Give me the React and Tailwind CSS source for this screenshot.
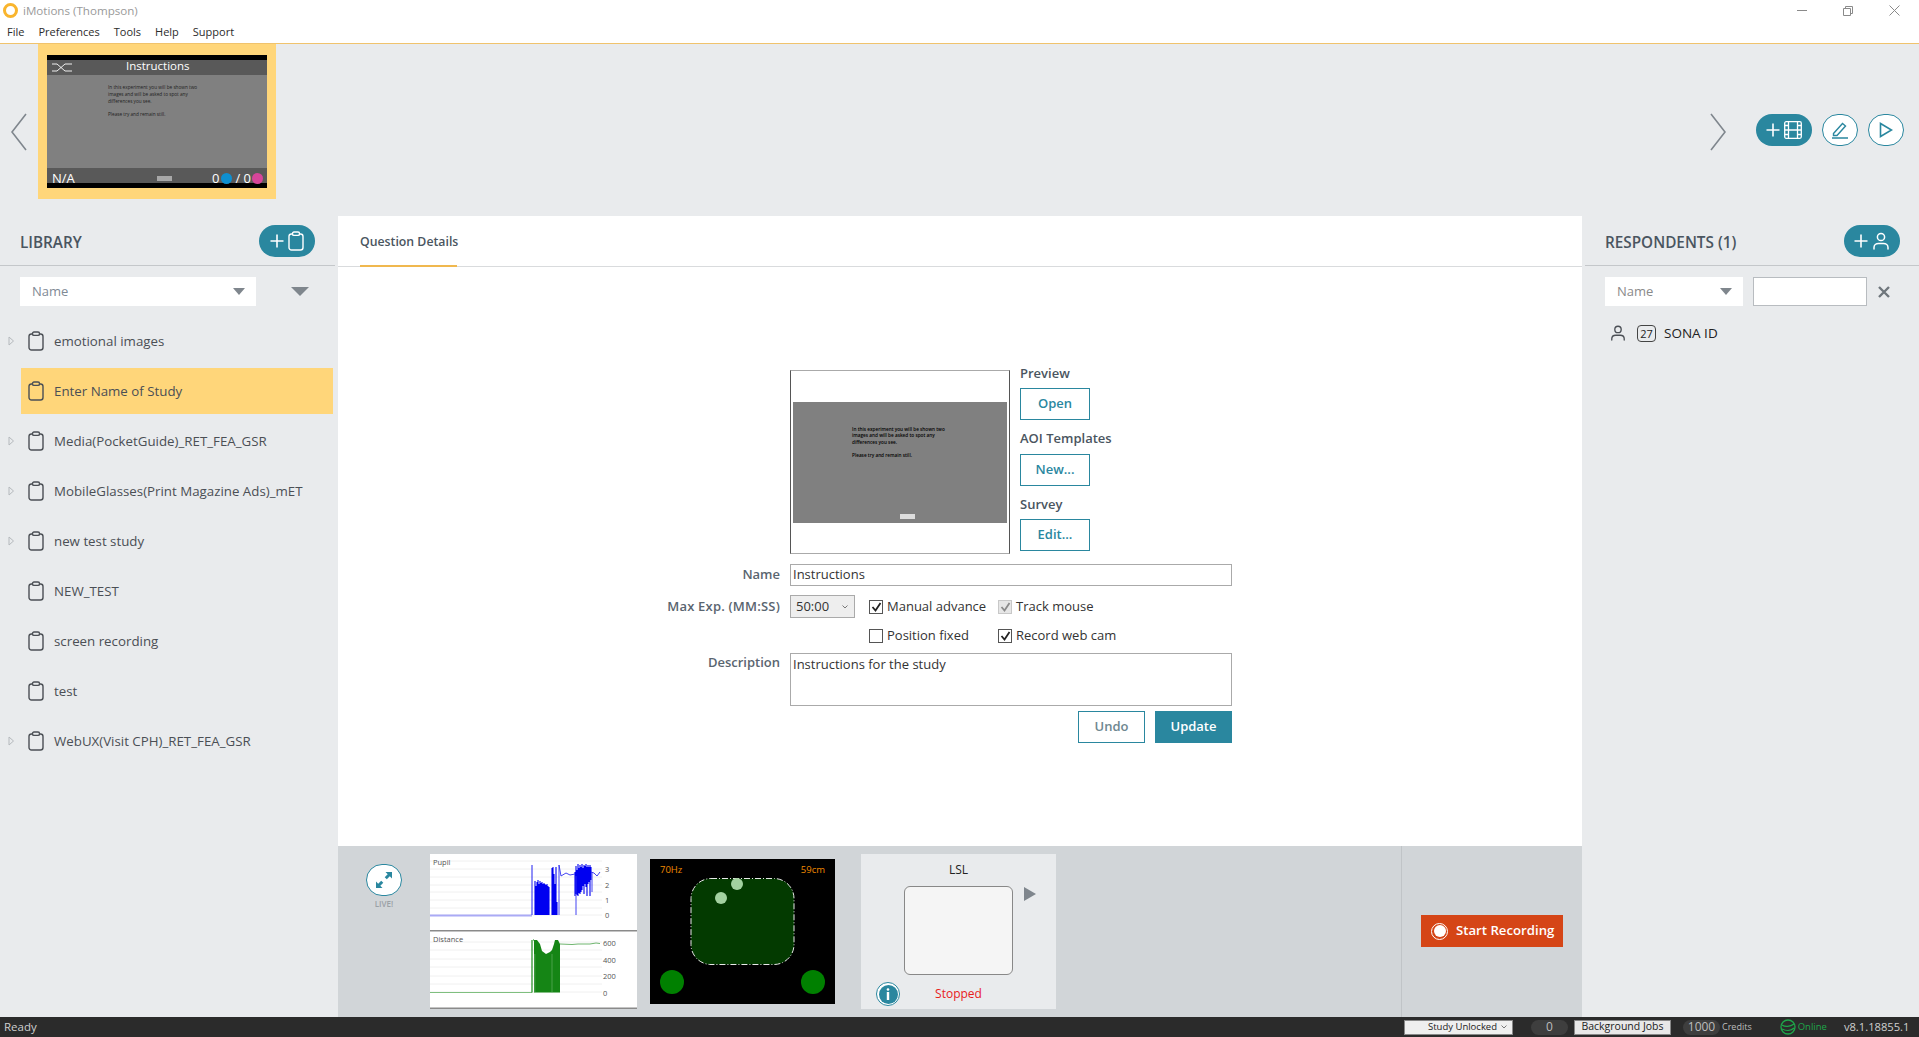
import React from 'react';

const ClipboardIcon = ({ className = 'text-[#4b4f55]' }) => (
    <svg width="16" height="20" viewBox="0 0 16 20" fill="none" stroke="currentColor" strokeWidth="1.4" className={className}>
        <rect x="1" y="3" width="14" height="16" rx="2.5" />
        <rect x="4.5" y="1" width="7" height="3.4" rx="1.5" fill="#e9ebed" />
    </svg>
);

const UserIcon = ({ size = 18, color = '#4b4f55' }) => (
    <svg width={size} height={size} viewBox="0 0 18 18" fill="none" stroke={color} strokeWidth="1.5">
        <circle cx="9" cy="5" r="3.6" />
        <path d="M2 17v-1.5c0-2.4 2-4 4.5-4h5c2.500 0 4.500 1.600 4.500 4V17" strokeLinecap="round" />
    </svg>
);

const PlusPill = ({ children }) => (
    <div className="flex h-[32px] w-[56px] items-center justify-center gap-[4px] rounded-full bg-[#2a879f]">
        <svg width="14" height="14" viewBox="0 0 14 14" stroke="white" strokeWidth="1.6"><path d="M7 0.500v13M0.500 7h13" /></svg>
        {children}
    </div>
);

const Triangle = () => (
    <svg width="7" height="10" viewBox="0 0 7 10" fill="none" stroke="#b5b9bd" strokeWidth="1"><path d="M1 1l4.500 4L1 9z" /></svg>
);

const Caret = ({ w = 12, h = 7, color = '#7f868d' }) => (
    <svg width={w} height={h} viewBox="0 0 12 7" fill={color} preserveAspectRatio="none"><path d="M0 0h12L6 7z" /></svg>
);

const studies = [
    { name: 'emotional images', arrow: true },
    { name: 'Enter Name of Study', active: true },
    { name: 'Media(PocketGuide)_RET_FEA_GSR', arrow: true },
    { name: 'MobileGlasses(Print Magazine Ads)_mET', arrow: true },
    { name: 'new test study', arrow: true },
    { name: 'NEW_TEST' },
    { name: 'screen recording' },
    { name: 'test' },
    { name: 'WebUX(Visit CPH)_RET_FEA_GSR', arrow: true },
];

const TitleBar = () => (
    <div className="h-[44px] shrink-0 border-b border-[#f0c36d] bg-white">
        <div className="flex h-[21px] items-center justify-between">
            <div className="flex items-center">
                <div className="ml-[3px] h-[15px] w-[15px] rounded-full border-[3px] border-[#f9b52e]" />
                <span className="ml-[5px] text-[11.600px] text-[#9a9a9a]">iMotions (Thompson)</span>
            </div>
            <div className="flex items-center gap-[36px] pr-[19px]">
                <div className="h-px w-[10px] bg-[#8a8a8a]" />
                <svg width="10" height="10" viewBox="0 0 10 10" fill="none" stroke="#8a8a8a"><path d="M2.500 2.500V0.500h7v7h-2M0.500 2.500h7v7h-7z" /></svg>
                <svg width="11" height="11" viewBox="0 0 11 11" stroke="#8a8a8a"><path d="M0.500 0.500l10 10M10.500 0.500l-10 10" /></svg>
            </div>
        </div>
        <div className="ml-[7px] flex h-[22px] items-center gap-[14px] text-[11px] text-[#2c2c2c]">
            <span>File</span>
            <span>Preferences</span>
            <span>Tools</span>
            <span>Help</span>
            <span>Support</span>
        </div>
    </div>
);

const SlideThumb = () => (
    <div className="flex h-[155px] w-[238px] items-start bg-[#ffd67a] pl-[9px] pt-[11px]">
        <div className="flex h-[133px] w-[220px] flex-col bg-black py-[5px]">
            <div className="flex h-[15px] items-center bg-[#595959] pl-[5px]">
                <svg width="21" height="9" viewBox="0 0 21 9" fill="none" stroke="white" strokeWidth="0.900"><path d="M0 1h5l8 7h7M0 8h5l8-7h7" /></svg>
                <span className="-mt-[3px] ml-[53px] text-[11.500px] leading-none text-white">Instructions</span>
            </div>
            <div className="h-[93px] bg-[#808080] pl-[61px] pt-[9px] text-[4.700px] leading-[7px] text-[#222]">
                <p>In this experiment you will be shown two</p>
                <p>images and will be asked to spot any</p>
                <p>differences you see.</p>
                <p className="mt-[6px]">Please try and remain still.</p>
            </div>
            <div className="flex h-[15px] items-center bg-[#595959] pl-[5px] pr-[4px] pt-[5px] text-[13px] leading-none text-white">
                <span className="w-[105px]">N/A</span>
                <div className="h-[5px] w-[15px] bg-[#a8a8a8]" />
                <div className="ml-auto flex items-center gap-[1px]">
                    <span>0</span>
                    <div className="ml-[1px] h-[11px] w-[11px] rounded-full bg-[#0e8fd0]" />
                    <span className="ml-[2px]">/ 0</span>
                    <div className="h-[11px] w-[11px] rounded-full bg-[#d6459a]" />
                </div>
            </div>
        </div>
    </div>
);

const SlideStrip = () => (
    <div className="flex h-[172px] shrink-0 bg-[#e9ebed]">
        <div className="flex h-[155px] w-[38px] items-center pl-[11px] pt-[20px]">
            <svg width="16" height="38" viewBox="0 0 16 38" fill="none" stroke="#7f868d" strokeWidth="1.600"><path d="M15 1L1 19l14 18" /></svg>
        </div>
        <SlideThumb />
        <div className="ml-[1434px] flex h-[155px] w-[16px] items-center pt-[20px]">
            <svg width="16" height="38" viewBox="0 0 16 38" fill="none" stroke="#7f868d" strokeWidth="1.600"><path d="M1 1l14 18L1 37" /></svg>
        </div>
        <div className="ml-[30px] flex items-start gap-[10px] pt-[70px]">
            <PlusPill>
                <svg width="18" height="18" viewBox="0 0 18 18" fill="none" stroke="white" strokeWidth="1.300">
                    <rect x="0.700" y="0.700" width="16.600" height="16.600" rx="1.500" />
                    <path d="M4.500 0.700v16.600M13.500 0.700v16.600M4.500 9h9M0.700 4.500h3.800M0.700 9h3.800M0.700 13.500h3.800M13.500 4.500h3.800M13.500 9h3.800M13.500 13.500h3.800" />
                </svg>
            </PlusPill>
            <div className="flex h-[32px] w-[36px] items-center justify-center rounded-full border border-[#2a879f] bg-white">
                <svg width="18" height="18" viewBox="0 0 18 18" fill="none" stroke="#2a879f" strokeWidth="1.400"><path d="M2.500 12.500L11.500 2.500l3 2.500-8.500 9.500H2.500zM1 17h16" /></svg>
            </div>
            <div className="flex h-[32px] w-[36px] items-center justify-center rounded-full border border-[#2a879f] bg-white">
                <svg width="14" height="16" viewBox="0 0 14 16" fill="none" stroke="#2a879f" strokeWidth="1.600"><path d="M1.500 1.500v13L12.500 8z" /></svg>
            </div>
        </div>
    </div>
);

const Library = () => (
    <aside className="flex w-[338px] shrink-0 flex-col bg-[#e9ebed]">
        <div className="mr-[3px] flex h-[50px] items-center justify-between border-b border-[#c4c7ca] pl-[20px] pr-[20px]">
            <span className="pt-[3px] text-[15.300px] font-semibold text-[#4a5560]">LIBRARY</span>
            <PlusPill><ClipboardIcon className="text-white [&_rect:last-child]:fill-[#2a879f]" /></PlusPill>
        </div>
        <div className="mt-[11px] flex items-center pl-[20px]">
            <div className="flex h-[29px] w-[236px] items-center justify-between bg-white pl-[12px] pr-[11px] text-[13px] text-[#7f8a95]">
                <span>Name</span>
                <Caret />
            </div>
            <div className="ml-[35px]"><Caret w={18} h={9} /></div>
        </div>
        <div className="mt-[12px] flex flex-col gap-[4px]">
            {studies.map((s) => (
                <div key={s.name} className="flex items-center">
                    <div className="flex w-[21px] justify-center pl-[1px]">{s.arrow && <Triangle />}</div>
                    <div className={`flex h-[46px] w-[312px] items-center gap-[10px] pl-[7px] text-[13.300px] text-[#4b4f55] ${s.active ? 'bg-[#ffd67a]' : ''}`}>
                        <ClipboardIcon className={s.active ? 'text-[#4b4f55] [&_rect:last-child]:fill-[#ffd67a]' : 'text-[#4b4f55]'} />
                        <span className="pt-[2px]">{s.name}</span>
                    </div>
                </div>
            ))}
        </div>
    </aside>
);

const OutlineButton = ({ children }) => (
    <div className="flex h-[32px] w-[70px] items-center justify-center border border-[#2a879f] text-[13px] font-semibold text-[#2a879f]">{children}</div>
);

const Check = ({ checked, disabled }) => (
    <div className={`flex h-[14px] w-[14px] items-center justify-center border ${disabled ? 'border-[#c8c8c8] bg-[#e6e6e6]' : 'border-[#555] bg-white'}`}>
        {checked && (
            <svg width="11" height="10" viewBox="0 0 11 10" fill="none" stroke={disabled ? '#8a8a8a' : '#222'} strokeWidth="1.800"><path d="M1.500 5l3 3.500L9.500 1" /></svg>
        )}
    </div>
);

const CheckField = ({ label, width, ...rest }) => (
    <div className={`flex items-center gap-[4px] text-[13px] text-[#333] ${width}`}>
        <Check {...rest} />
        <span>{label}</span>
    </div>
);

const FormLabel = ({ children, className = '' }) => (
    <div className={`w-[120px] shrink-0 text-right text-[13px] font-semibold text-[#5a6570] ${className}`}>{children}</div>
);

const QuestionForm = () => (
    <div className="ml-[322px] flex flex-col pt-[103px]">
        <div className="ml-[130px] flex gap-[10px]">
            <div className="flex h-[184px] w-[220px] flex-col justify-center border border-[#555] border-t-[#aaa] border-b-[#aaa] bg-white px-[2px]">
                <div className="relative h-[121px] bg-[#808080] pl-[59px] pt-[24px] text-[4.700px] font-semibold leading-[6.500px] text-black">
                    <p>In this experiment you will be shown two</p>
                    <p>images and will be asked to spot any</p>
                    <p>differences you see.</p>
                    <p className="mt-[6.500px]">Please try and remain still.</p>
                    <div className="absolute bottom-[4px] left-[107px] h-[5px] w-[15px] bg-[#ddd]" />
                </div>
            </div>
            <div className="-mt-[5px] flex flex-col">
                <div className="mb-[5px] flex h-[18px] items-center text-[13px] font-semibold text-[#4a5560]">Preview</div>
                <OutlineButton>Open</OutlineButton>
                <div className="mt-[9px] flex h-[25px] items-center pb-[5px] text-[13px] font-semibold text-[#4a5560]">AOI Templates</div>
                <OutlineButton>New...</OutlineButton>
                <div className="mt-[9px] flex h-[24px] items-center pb-[4px] text-[13px] font-semibold text-[#4a5560]">Survey</div>
                <OutlineButton>Edit...</OutlineButton>
            </div>
        </div>
        <div className="mt-[10px] flex items-center gap-[10px]">
            <FormLabel>Name</FormLabel>
            <div className="flex h-[22px] w-[442px] items-center border border-[#aaa] pl-[2px] text-[13px] text-[#333]">Instructions</div>
        </div>
        <div className="mt-[9px] flex gap-[10px]">
            <FormLabel className="whitespace-nowrap leading-[23px] tracking-[0.200px]">
                <span className="float-right">Max Exp. (MM:SS)</span>
            </FormLabel>
            <div className="flex h-[23px] w-[65px] items-center justify-between border border-[#aaa] bg-[#eeeeee] pl-[5px] pr-[6px] text-[13px] text-[#333]">
                <span>50:00</span>
                <svg width="6" height="4" viewBox="0 0 6 4" fill="none" stroke="#777"><path d="M0.500 0.500L3 3l2.500-2.500" /></svg>
            </div>
            <div className="ml-[4px] flex flex-col">
                <div className="flex h-[23px] items-center">
                    <CheckField label="Manual advance" width="w-[129px]" checked />
                    <CheckField label="Track mouse" checked disabled />
                </div>
                <div className="mt-[6px] flex h-[23px] items-center">
                    <CheckField label="Position fixed" width="w-[129px]" />
                    <CheckField label="Record web cam" checked />
                </div>
            </div>
        </div>
        <div className="mt-[6px] flex gap-[10px]">
            <FormLabel>Description</FormLabel>
            <div className="h-[53px] w-[442px] border border-[#aaa] pl-[2px] pt-[1px] text-[13px] text-[#333]">Instructions for the study</div>
        </div>
        <div className="ml-[130px] mt-[5px] flex w-[442px] justify-end gap-[10px]">
            <div className="flex h-[32px] w-[67px] items-center justify-center border border-[#2a879f] text-[13px] font-semibold text-[#6e8790]">Undo</div>
            <div className="flex h-[32px] w-[77px] items-center justify-center bg-[#2a879f] text-[13px] font-semibold text-white">Update</div>
        </div>
    </div>
);

const gridLines = (ys) => ys.map((y) => <path key={y} d={`M0 ${y}H172`} stroke="#f0f0f0" strokeWidth="1" />);

// rough pupil trace, x / top pairs read off the reference
const pupilDense = [
    [105, 27], [106, 32], [107, 28], [108, 26], [109, 30], [110, 27], [111, 29], [112, 28], [113, 30], [114, 29],
    [115, 30], [116, 31], [117, 30], [118, 32], [119, 33], [122, 14], [123, 13], [124, 20], [125, 30], [126, 13], [127, 48],
];
const pupilUpper = [
    [145, 18, 42], [146, 12, 40], [147, 16, 41], [148, 10, 42], [149, 14, 39], [150, 11, 40], [151, 13, 38], [152, 10, 36],
    [153, 14, 32], [154, 11, 40], [155, 12, 30], [156, 10, 33], [157, 13, 42], [158, 11, 30], [159, 13, 28], [160, 11, 42], [161, 13, 26],
];

const GazeCharts = () => (
    <svg width="207" height="155" viewBox="0 0 207 155" className="block bg-white" style={{ fontFamily: 'Open Sans, sans-serif' }}>
        {gridLines([7, 15, 23, 31, 38, 46, 54, 61])}
        <text x="3" y="11" fontSize="7.500" fill="#555">Pupil</text>
        <path d="M0 61.500H102" stroke="#aaaaf5" strokeWidth="2" />
        <path d="M102 61V11" stroke="#2020f0" strokeWidth="1" />
        <path d={pupilDense.map(([x, y]) => `M${x} 61V${y}`).join('')} stroke="#0000f0" strokeWidth="1.100" fill="none" />
        <path d={pupilUpper.map(([x, a, b]) => `M${x} ${a}V${b}`).join('')} stroke="#0000f0" strokeWidth="1.100" fill="none" />
        <path d="M129 61V11L131 22L136 19L140 21L145 20M161 18L164 19L167 22L170 18M146 22V61M162 18V38" stroke="#3030f0" strokeWidth="0.900" fill="none" />
        <text x="175" y="18" fontSize="7.500" fill="#555">3</text>
        <text x="175" y="34" fontSize="7.500" fill="#555">2</text>
        <text x="175" y="49" fontSize="7.500" fill="#555">1</text>
        <text x="175" y="64" fontSize="7.500" fill="#555">0</text>
        <rect x="0" y="76" width="207" height="1.500" fill="#8a8a8a" />
        {gridLines([88, 96, 105, 113, 122, 130, 138])}
        <text x="3" y="88" fontSize="7.500" fill="#555">Distance</text>
        <path d="M0 138.500H102" stroke="#7fbf7f" strokeWidth="1" />
        <path d="M102 138.500V86M103 86h1" stroke="#1f8c1f" strokeWidth="1.200" fill="none" />
        <path d="M104 138.500V86h3L110 90L112 97L116 100L120 98L122 96L124 90L125 86H128L130 90V138.500Z" fill="#158515" />
        <path d="M104.800 138.500V100M122 138.500V100" stroke="#6fb56f" strokeWidth="0.600" />
        <path d="M130 90L142 90.500L148 90L160 90L166 89L170 89.500" stroke="#6fb56f" strokeWidth="1" fill="none" />
        <text x="173" y="92" fontSize="7.500" fill="#555">600</text>
        <text x="173" y="109" fontSize="7.500" fill="#555">400</text>
        <text x="173" y="125" fontSize="7.500" fill="#555">200</text>
        <text x="173" y="142" fontSize="7.500" fill="#555">0</text>
        <rect x="0" y="153.500" width="207" height="1.500" fill="#8a8a8a" />
    </svg>
);

const EyeBox = () => (
    <svg width="185" height="145" viewBox="0 0 185 145" className="block bg-black" style={{ fontFamily: 'Open Sans, sans-serif' }}>
        <text x="10" y="14" fontSize="9.500" fill="#f08a00">70Hz</text>
        <text x="175" y="14" fontSize="9.500" fill="#f08a00" textAnchor="end">59cm</text>
        <rect x="41" y="19.500" width="103" height="86" rx="20" fill="#033a00" stroke="#e8e8e8" strokeWidth="1" strokeDasharray="6 2 1 2" />
        <circle cx="87" cy="25" r="6" fill="#a3d1a0" />
        <circle cx="71" cy="39" r="6" fill="#a3d1a0" />
        <circle cx="22" cy="123" r="12" fill="#008000" />
        <circle cx="163" cy="123" r="12" fill="#008000" />
    </svg>
);

const LslCard = () => (
    <div className="ml-[26px] mt-[8px] h-[155px] w-[195px] bg-[#e9ebed]">
        <div className="pt-[7px] text-center text-[12px] text-[#222]">LSL</div>
        <div className="ml-[43px] mt-[7px] flex items-start">
            <div className="h-[89px] w-[109px] rounded-[6px] border border-[#888] bg-[#f5f5f5]" />
            <svg width="12" height="14" viewBox="0 0 12 14" fill="#7f868d" className="ml-[11px] mt-[1px]"><path d="M0 0l12 7-12 7z" /></svg>
        </div>
        <div className="relative mt-[7px] flex h-[24px] items-center justify-center text-[12px] text-[#e8201c]">
            Stopped
            <div className="absolute left-[15px] top-[0px] flex h-[24px] w-[24px] items-center justify-center rounded-full border border-[#2a879f] bg-white">
                <div className="flex h-[19px] w-[19px] items-center justify-center rounded-full bg-[#2a879f]">
                    <svg width="4" height="12" viewBox="0 0 4 12" fill="white"><circle cx="2" cy="1.500" r="1.300" /><rect x="0.800" y="4" width="2.400" height="8" /></svg>
                </div>
            </div>
        </div>
    </div>
);

const RecordingStrip = () => (
    <div className="flex h-[171px] shrink-0 bg-[#d1d5d8]">
        <div className="flex w-[92px] flex-col items-center pt-[18px]">
            <div className="flex h-[32px] w-[36px] items-center justify-center rounded-full border border-[#2a879f] bg-white">
                <svg width="18" height="18" viewBox="0 0 18 18" fill="#2a879f"><path d="M10.500 1h6.500v6.500l-2.200-2.200-3 3-2.100-2.100 3-3zM7.500 17H1v-6.500l2.200 2.200 3-3 2.100 2.100-3 3z" /></svg>
            </div>
            <span className="mt-[2px] text-[8px] font-semibold text-[#9aa1a6]">LIVE!</span>
        </div>
        <div className="pt-[8px]"><GazeCharts /></div>
        <div className="ml-[13px] pt-[13px]"><EyeBox /></div>
        <LslCard />
        <div className="ml-[345px] flex flex-1 items-start border-l border-[#c0c4c7] pl-[19px] pt-[69px]">
            <div className="flex h-[32px] w-[142px] items-center gap-[8px] bg-[#d54516] pl-[10px] text-[13.200px] font-semibold text-white">
                <div className="flex h-[17px] w-[17px] items-center justify-center rounded-full border border-white">
                    <div className="h-[12px] w-[12px] rounded-full bg-white" />
                </div>
                <span>Start Recording</span>
            </div>
        </div>
    </div>
);

const Respondents = () => (
    <aside className="flex w-[337px] shrink-0 flex-col bg-[#e9ebed]">
        <div className="ml-[3px] flex h-[50px] items-center justify-between border-b border-[#c4c7ca] pl-[20px] pr-[19px]">
            <span className="pt-[3px] text-[15.300px] font-semibold text-[#4a5560]">RESPONDENTS (1)</span>
            <PlusPill><UserIcon color="white" /></PlusPill>
        </div>
        <div className="mt-[11px] flex items-center pl-[23px]">
            <div className="flex h-[29px] w-[138px] items-center justify-between bg-white pl-[12px] pr-[11px] text-[13px] text-[#8a8a8a]">
                <span>Name</span>
                <Caret />
            </div>
            <div className="ml-[10px] h-[29px] w-[114px] border border-[#b8bcc0] bg-white" />
            <svg width="12" height="12" viewBox="0 0 12 12" stroke="#6f767c" strokeWidth="2.400" className="ml-[11px]"><path d="M1 1l10 10M11 1L1 11" /></svg>
        </div>
        <div className="mt-[17px] flex items-center pl-[28px] text-[13.500px] text-[#222]">
            <UserIcon size={16} />
            <div className="ml-[11px] flex h-[17px] w-[19px] items-center justify-center rounded-[4px] border border-[#444] text-[11px] leading-none">27</div>
            <span className="ml-[8px]">SONA ID</span>
        </div>
    </aside>
);

const StatusBar = () => (
    <div className="flex h-[20px] shrink-0 items-center bg-[#2b2b2b] pl-[4px] text-[12px] text-[#cfcfcf]">
        <span className="w-[1400px] text-[11.500px]">Ready</span>
        <div className="flex h-[15px] w-[109px] items-center justify-between border border-[#888] bg-[#efefef] pl-[23px] pr-[5px] text-[9.500px] text-[#222]">
            <span>Study Unlocked</span>
            <svg width="6" height="4" viewBox="0 0 6 4" fill="none" stroke="#777"><path d="M0.500 0.500L3 3l2.500-2.500" /></svg>
        </div>
        <div className="ml-[18px] flex h-[15px] w-[37px] items-center justify-center rounded-full bg-[#3e3e3e] text-[#bdbdbd]">0</div>
        <div className="ml-[6px] flex h-[15px] w-[97px] items-center justify-center border border-[#888] bg-[#e8e8e8] text-[10.500px] text-[#222]">Background Jobs</div>
        <div className="ml-[12px] flex h-[15px] w-[37px] items-center justify-center rounded-full bg-[#3e3e3e] text-[#bdbdbd]">1000</div>
        <span className="ml-[2px] text-[9px] text-[#bdbdbd]">Credits</span>
        <svg width="16" height="16" viewBox="0 0 16 16" fill="none" stroke="#1ea64a" strokeWidth="1.300" className="ml-[28px]"><circle cx="8" cy="8" r="7" /><path d="M2 6c3 2 8 2 12-1M2 10c4 2 9 2 12-1" /></svg>
        <span className="ml-[2px] text-[9.500px] text-[#1ea64a]">Online</span>
        <span className="ml-[17px] text-[11.200px] text-[#cfcfcf]">v8.1.18855.1</span>
    </div>
);

export default function App() {
    return (
        <div className="flex h-[1037px] w-[1919px] flex-col overflow-hidden bg-white" style={{ fontFamily: '"Open Sans", "Noto Sans", sans-serif' }}>
            <TitleBar />
            <SlideStrip />
            <div className="flex min-h-0 flex-1">
                <Library />
                <main className="flex min-w-0 flex-1 flex-col bg-white">
                    <div className="flex h-[51px] shrink-0 items-end border-b border-[#d9dbdd] pl-[22px]">
                        <div className="-mb-px flex h-[51px] w-[97px] items-center whitespace-nowrap border-b-2 border-[#f0b84f] pt-[3px] text-[12.300px] font-semibold text-[#4a5560]">Question Details</div>
                    </div>
                    <div className="min-h-0 flex-1"><QuestionForm /></div>
                    <RecordingStrip />
                </main>
                <Respondents />
            </div>
            <StatusBar />
        </div>
    );
}
